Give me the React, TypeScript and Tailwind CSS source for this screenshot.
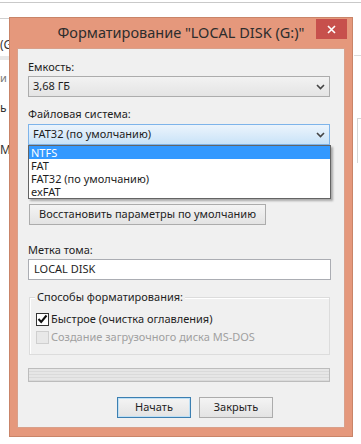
import React from "react";

const font = { fontFamily: '"Noto Sans", "Open Sans", sans-serif' };

function Chevron() {
  return (
    <svg width="9" height="6" viewBox="0 0 9 6" className="shrink-0">
      <path d="M1 1 L4.5 4.5 L8 1" fill="none" stroke="#444" strokeWidth="1.6" />
    </svg>
  );
}

function Label({ children, className = "" }: { children: React.ReactNode; className?: string }) {
  return <div className={`h-[16px] leading-[16px] text-[11px] text-[#1e1e1e] ${className}`}>{children}</div>;
}

function Button({ children, primary = false, className = "" }: { children: React.ReactNode; primary?: boolean; className?: string }) {
  return (
    <div
      className={`h-[21px] flex items-center justify-center whitespace-nowrap text-[11px] text-[#1e1e1e] bg-gradient-to-b from-[#f4f4f4] to-[#e3e3e3] border ${
        primary ? "border-[#3c7fb1] shadow-[inset_0_0_0_1px_#bfe0f5]" : "border-[#acacac]"
      } ${className}`}
    >
      {children}
    </div>
  );
}

export default function App() {
  return (
    <div className="relative w-[361px] h-[444px] overflow-hidden bg-white" style={font}>
      {/* desktop behind the dialog */}
      <div className="absolute left-0 top-[2px] w-full h-px bg-[#c9c9c9]" />
      <div className="absolute left-0 top-[18px] w-[12px] h-[300px] bg-white border-t border-[#d0d0d0]">
        <div className="absolute left-0 top-[20px] text-[12px] text-[#333] leading-none">(G</div>
        <div className="absolute left-0 top-[37px] w-full h-[4px] bg-[#e8e8e8]" />
        <div className="absolute left-0 top-[53px] text-[11px] text-[#777] leading-none">и</div>
        <div className="absolute left-0 top-[83px] text-[12px] text-[#333] leading-none">ь</div>
        <div className="absolute left-0 top-[125px] text-[12px] text-[#333] leading-none">М</div>
      </div>
      <div className="absolute left-[354px] top-[55px] w-[7px] h-px bg-[#dcdcdc]" />
      <div className="absolute left-[357px] top-[118px] w-[4px] h-[45px] border-l border-t border-[#d6d6d6]" />

      {/* dialog */}
      <div className="relative ml-[9px] mt-[17px] w-[344px] h-[420px] bg-[#e5987c] border border-[#c98468] flex flex-col">
        <div className="relative h-[30px] shrink-0 flex items-center justify-center">
          <span className="text-[14.5px] text-[#2d2d2d]">Форматирование "LOCAL DISK (G:)"</span>
          <div className="absolute right-[5px] top-[1px] w-[31px] h-[20px] bg-[#c7504c] flex items-center justify-center">
            <svg width="9" height="9" viewBox="0 0 9 9">
              <path d="M1 1 L8 8 M8 1 L1 8" stroke="#fff" strokeWidth="1.6" />
            </svg>
          </div>
        </div>

        <div className="relative mx-[7px] h-[380px] bg-[#f0f0f0] border border-[#d9a08a] pl-[10px] pt-[10px]">
          <Label>Емкость:</Label>
          <div className="mt-[1px] w-[302px] h-[21px] border border-[#acacac] bg-gradient-to-b from-[#f2f2f2] to-[#e4e4e4] flex items-center justify-between pl-[4px] pr-[4px]">
            <span className="text-[11px] text-[#1e1e1e]">3,68 ГБ</span>
            <Chevron />
          </div>

          <Label className="mt-[9px]">Файловая система:</Label>
          <div className="relative mt-[2px] w-[302px]">
            <div className="h-[21px] border border-[#7eb4ea] bg-gradient-to-b from-[#ecf4fc] to-[#c9e3f8] flex items-center justify-between pl-[4px] pr-[4px]">
              <span className="text-[11px] text-[#1e1e1e]">FAT32 (по умолчанию)</span>
              <Chevron />
            </div>
            <div className="absolute left-0 top-[21px] z-10 w-[303px] bg-white border border-[#646464] shadow-[2px_2px_2px_rgba(0,0,0,0.3)] text-[11px] text-[#1e1e1e]">
              <div className="h-[13px] leading-[13px] bg-[#3399ff] text-white pl-[2px]">NTFS</div>
              <div className="h-[13px] leading-[13px] pl-[2px]">FAT</div>
              <div className="h-[13px] leading-[13px] pl-[2px]">FAT32 (по умолчанию)</div>
              <div className="h-[13px] leading-[13px] pl-[2px]">exFAT</div>
            </div>
          </div>

          <Button className="mt-[59px] ml-[1px] w-[237px]">Восстановить параметры по умолчанию</Button>

          <Label className="mt-[17px]">Метка тома:</Label>
          <div className="mt-[1px] w-[303px] h-[21px] bg-white border border-[#abadb3] flex items-center pl-[5px]">
            <span className="text-[11px] text-[#1e1e1e]">LOCAL DISK</span>
          </div>

          <div className="relative mt-[17px] ml-[1px] w-[301px] h-[58px] border border-[#dcdcdc] shadow-[inset_1px_1px_0_#fff] pl-[6px] pt-[13px]">
            <div className="absolute left-[5px] top-[-9px] px-[2px] bg-[#f0f0f0] text-[11px] leading-[16px] text-[#1e1e1e]">
              Способы форматирования:
            </div>
            <div className="flex items-center h-[16px]">
              <div className="w-[13px] h-[13px] bg-white border border-[#333] flex items-center justify-center">
                <svg width="11" height="10" viewBox="0 0 11 10">
                  <path d="M1.5 5 L4.2 8 L9.5 1.5" fill="none" stroke="#111" strokeWidth="2" />
                </svg>
              </div>
              <span className="ml-[2px] text-[11px] text-[#1e1e1e]">Быстрое (очистка оглавления)</span>
            </div>
            <div className="flex items-center h-[16px] mt-[2px]">
              <div className="w-[13px] h-[13px] bg-[#e8e8e8] border border-[#cfcfcf]" />
              <span className="ml-[2px] text-[11px] text-[#a0a0a0]">Создание загрузочного диска MS-DOS</span>
            </div>
          </div>

          <div className="mt-[13px] w-[302px] h-[14px] border border-[#bcbcbc] bg-[repeating-linear-gradient(to_bottom,#e6e6e6_0px,#e6e6e6_2px,#dadada_2px,#dadada_3px)]" />

          <div className="mt-[15px] flex gap-[8px] pl-[89px]">
            <Button primary className="w-[74px]">Начать</Button>
            <Button className="w-[74px]">Закрыть</Button>
          </div>
        </div>
      </div>
    </div>
  );
}
